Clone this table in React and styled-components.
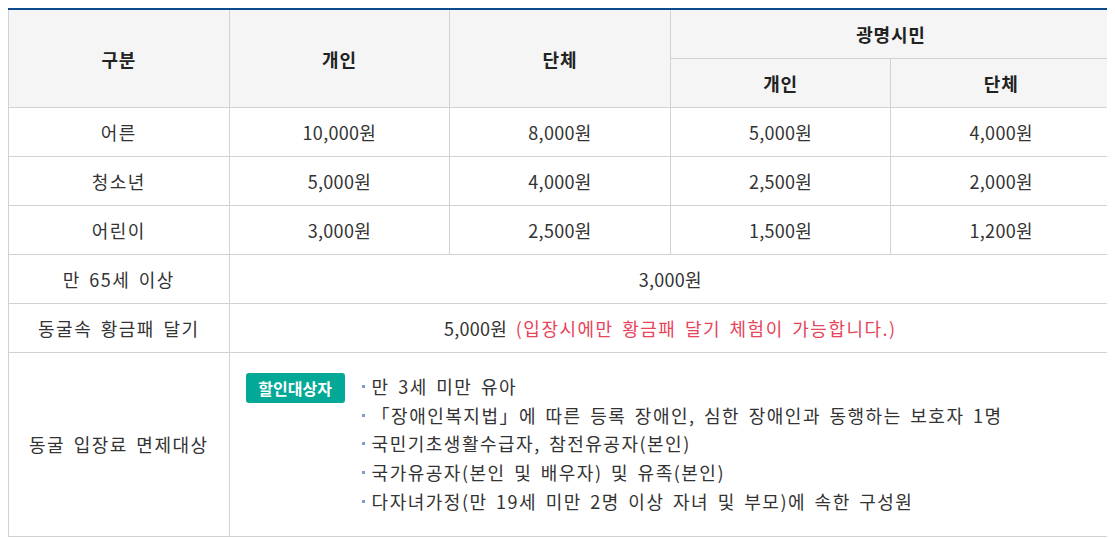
import React from "react";
import styled, { createGlobalStyle } from "styled-components";

const GlobalStyle = createGlobalStyle`
    body {
        margin: 8px;
        background: #fff;
        font-family: "Noto Sans CJK KR", "Noto Sans", sans-serif;
        color: #333;
    }
`

export const Table = styled.table`
    width: 1104px;
    border-collapse: collapse;
    table-layout: fixed;
    border-top: 2px solid #0b4a8f;
    font-size: 18px;
    letter-spacing: 1.5px;
    word-spacing: 3px;
`

export const Th = styled.th`
    height: 48px;
    padding: 0;
    background: #f5f5f5;
    border: 1px solid #d2d2d2;
    border-top: none;
    font-weight: 700;
    letter-spacing: 0.8px;
    color: #222;
    text-align: center;
    vertical-align: middle;
`

export const Td = styled.td`
    height: 48px;
    padding: 0;
    border: 1px solid #d2d2d2;
    text-align: center;
    vertical-align: middle;
    color: #333;
`

export const Price = styled.span`
    letter-spacing: 0.3px;
`

export const Note = styled.span`
    color: #e8445a;
`

export const InfoCell = styled.td`
    border: 1px solid #d2d2d2;
    padding: 19px 16px 20px;
    vertical-align: top;
    text-align: left;
`

export const InfoWrap = styled.div`
    display: flex;
    align-items: flex-start;
    gap: 17px;
`

export const Badge = styled.span`
    flex: none;
    display: inline-flex;
    align-items: center;
    justify-content: center;
    width: 99px;
    height: 30px;
    margin-top: 1px;
    border-radius: 3px;
    background: #03a996;
    color: #fff;
    font-size: 16px;
    font-weight: 700;
    letter-spacing: 0;
`

export const List = styled.ul`
    margin: 0;
    padding: 0;
    list-style: none;
`

export const Item = styled.li`
    position: relative;
    padding-left: 10px;
    line-height: 28.7px;
    color: #333;
    &::before {
        content: "";
        position: absolute;
        left: 0;
        top: 13px;
        width: 3px;
        height: 3px;
        background: #7f9ed0;
    }
`

const rows = [
    ["어른", "10,000원", "8,000원", "5,000원", "4,000원"],
    ["청소년", "5,000원", "4,000원", "2,500원", "2,000원"],
    ["어린이", "3,000원", "2,500원", "1,500원", "1,200원"],
]

const exempt = [
    "만 3세 미만 유아",
    "「장애인복지법」에 따른 등록 장애인, 심한 장애인과 동행하는 보호자 1명",
    "국민기초생활수급자, 참전유공자(본인)",
    "국가유공자(본인 및 배우자) 및 유족(본인)",
    "다자녀가정(만 19세 미만 2명 이상 자녀 및 부모)에 속한 구성원",
]

export default function App() {
    return (
        <>
            <GlobalStyle />
            <Table>
                <thead>
                    <tr>
                        <Th rowSpan={2}>구분</Th>
                        <Th rowSpan={2}>개인</Th>
                        <Th rowSpan={2}>단체</Th>
                        <Th colSpan={2}>광명시민</Th>
                    </tr>
                    <tr>
                        <Th>개인</Th>
                        <Th>단체</Th>
                    </tr>
                </thead>
                <tbody>
                    {rows.map(r => (
                        <tr key={r[0]}>
                            <Td>{r[0]}</Td>
                            {r.slice(1).map((c, i) => <Td key={i}><Price>{c}</Price></Td>)}
                        </tr>
                    ))}
                    <tr>
                        <Td>만 65세 이상</Td>
                        <Td colSpan={4}><Price>3,000원</Price></Td>
                    </tr>
                    <tr>
                        <Td>동굴속 황금패 달기</Td>
                        <Td colSpan={4}><Price>5,000원</Price> <Note>(입장시에만 황금패 달기 체험이 가능합니다.)</Note></Td>
                    </tr>
                    <tr>
                        <Td>동굴 입장료 면제대상</Td>
                        <InfoCell colSpan={4}>
                            <InfoWrap>
                                <Badge>할인대상자</Badge>
                                <List>
                                    {exempt.map(t => <Item key={t}>{t}</Item>)}
                                </List>
                            </InfoWrap>
                        </InfoCell>
                    </tr>
                </tbody>
            </Table>
        </>
    );
}
